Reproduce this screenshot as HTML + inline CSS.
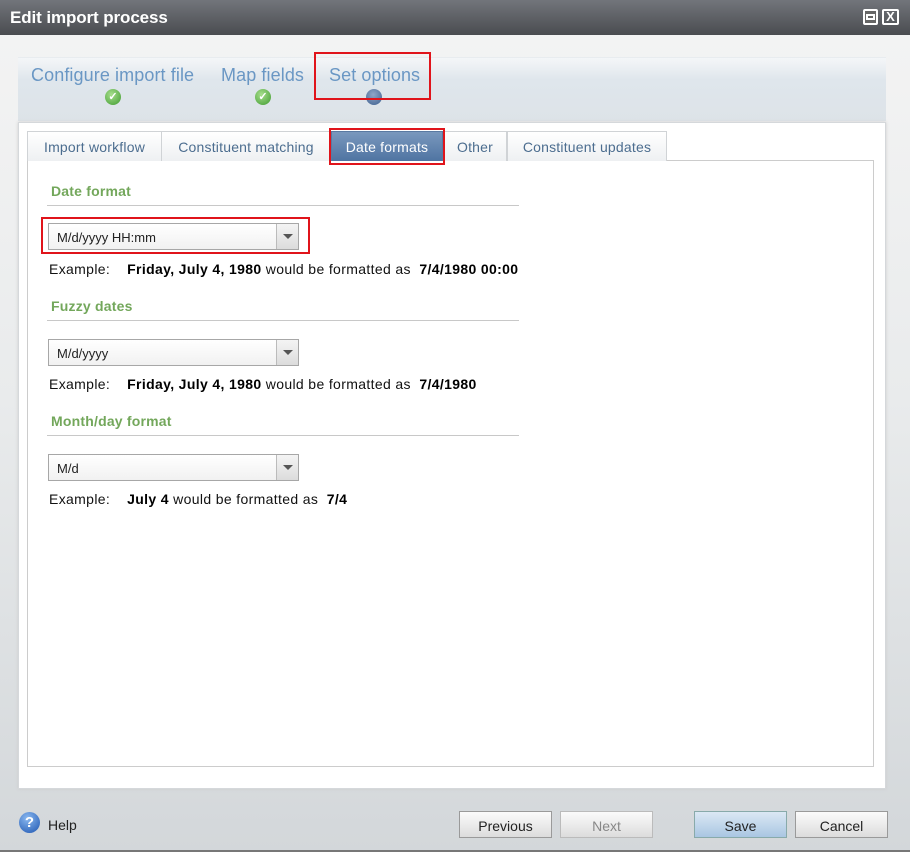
<!DOCTYPE html>
<html><head><style>
*{box-sizing:border-box;margin:0;padding:0}
body{width:910px;height:852px;overflow:hidden;font-family:"Liberation Sans",sans-serif;background:linear-gradient(#f4f4f4 0,#e9ebec 400px,#d3d7da 852px);position:relative;font-size:14px}
.abs{position:absolute}
.title{left:0;top:0;width:910px;height:35px;background:linear-gradient(#72757b,#4a4c50);color:#fff;font-weight:bold;font-size:17px;padding:8px 10px;letter-spacing:-0.1px}
.wiz{left:18px;top:57px;width:868px;height:64px;background:linear-gradient(#f4f6f8 0,#dfe6ec 35%,#dde3e8 100%);border-top:1px solid #e8ecef}
.step{font-size:18px;color:#6a97c4;top:65px;letter-spacing:0.1px}
.chk{width:16px;height:16px;border-radius:50%;background:radial-gradient(circle at 40% 35%,#a6de8c,#3f9a2f);top:89px;color:#fff;font-size:11px;text-align:center;line-height:16px;font-weight:bold}
.panel{left:18px;top:122px;width:868px;height:667px;background:#fff;border:1px solid #d5d8db;box-shadow:0 0 3px #ccc}
.inner{left:27px;top:160px;width:847px;height:607px;border:1px solid #ccc;background:#fff}
.tab{top:131px;height:30px;border:1px solid #d0d3d6;border-bottom:none;background:linear-gradient(#fff,#eef0f2);color:#4c6d8f;font-size:14px;padding:7px 0 0;text-align:center;letter-spacing:0.2px}
.red{border:2px solid #e0141b}
.h{color:#73a75b;font-weight:bold;font-size:14px;left:51px;letter-spacing:0.2px}
.line{left:47px;width:472px;height:1px;background:#c8c8c8}
.sel{left:48px;width:251px;height:27px;border:1px solid #a7a7a7;background:linear-gradient(#fff,#f1f1f1);font-size:13px;padding:6px 0 0 8px;color:#222}
.sel .arr{position:absolute;right:0;top:0;width:22px;height:25px;border-left:1px solid #bbb;background:linear-gradient(#f4f4f4,#dcdcdc)}
.sel .arr:after{content:"";position:absolute;left:6px;top:10px;border:5px solid transparent;border-top:5px solid #555}
.ex{left:49px;font-size:14px;color:#111;letter-spacing:0.35px}
.ex b{color:#000}
.btn{top:811px;width:93px;height:27px;border:1px solid #9a9a9a;background:linear-gradient(#fbfbfb,#dcdcdc);font-size:14px;text-align:center;padding-top:6px;color:#222}
</style></head><body>
<div class="abs title">Edit import process</div>
<div class="abs" style="left:863px;top:9px;width:15px;height:16px;border:2px solid #fff;border-radius:2px;background:#666"><div style="margin:3px 1px;height:6px;border:2px solid #fff"></div></div>
<div class="abs" style="left:882px;top:9px;width:17px;height:16px;border:2px solid #fff;border-radius:2px;color:#fff;font-size:13px;font-weight:bold;text-align:center;line-height:12px">X</div>
<div class="abs wiz"></div>
<div class="abs step" style="left:31px">Configure import file</div>
<div class="abs step" style="left:221px">Map fields</div>
<div class="abs step" style="left:329px">Set options</div>
<div class="abs chk" style="left:105px">✓</div>
<div class="abs chk" style="left:255px">✓</div>
<div class="abs" style="left:366px;top:89px;width:16px;height:16px;border-radius:50%;background:radial-gradient(circle at 45% 35%,#8fa6c7,#3d5f8f)"></div>
<div class="abs red" style="left:314px;top:52px;width:117px;height:48px"></div>
<div class="abs panel"></div>
<div class="abs inner"></div>
<div class="abs tab" style="left:27px;width:135px">Import workflow</div>
<div class="abs tab" style="left:161px;width:170px">Constituent matching</div>
<div class="abs tab" style="left:331px;width:112px;background:linear-gradient(#7a98bd,#4f74a2);color:#fff;border-color:#5a7aa2">Date formats</div>
<div class="abs tab" style="left:443px;width:64px">Other</div>
<div class="abs tab" style="left:507px;width:160px">Constituent updates</div>
<div class="abs red" style="left:329px;top:128px;width:116px;height:37px"></div>
<div class="abs h" style="top:183px">Date format</div>
<div class="abs line" style="top:205px"></div>
<div class="abs sel" style="top:223px">M/d/yyyy HH:mm<div class="arr"></div></div>
<div class="abs red" style="left:41px;top:217px;width:269px;height:37px"></div>
<div class="abs ex" style="top:261px">Example:&nbsp;&nbsp;&nbsp; <b>Friday, July 4, 1980</b> would be formatted as&nbsp; <b>7/4/1980 00:00</b></div>
<div class="abs h" style="top:298px">Fuzzy dates</div>
<div class="abs line" style="top:320px"></div>
<div class="abs sel" style="top:339px">M/d/yyyy<div class="arr"></div></div>
<div class="abs ex" style="top:376px">Example:&nbsp;&nbsp;&nbsp; <b>Friday, July 4, 1980</b> would be formatted as&nbsp; <b>7/4/1980</b></div>
<div class="abs h" style="top:413px">Month/day format</div>
<div class="abs line" style="top:435px"></div>
<div class="abs sel" style="top:454px">M/d<div class="arr"></div></div>
<div class="abs ex" style="top:491px">Example:&nbsp;&nbsp;&nbsp; <b>July 4</b> would be formatted as&nbsp; <b>7/4</b></div>
<div class="abs" style="left:19px;top:812px;width:21px;height:21px;border-radius:50%;background:radial-gradient(circle at 40% 30%,#8ab8f0,#1d55b0);color:#fff;font-weight:bold;font-size:15px;text-align:center;line-height:21px">?</div>
<div class="abs" style="left:48px;top:817px;font-size:14px;color:#222">Help</div>
<div class="abs btn" style="left:459px">Previous</div>
<div class="abs btn" style="left:560px;color:#888;border-color:#bbb">Next</div>
<div class="abs btn" style="left:694px;background:linear-gradient(#dbe8f4,#a9c6e2);border-color:#8aa">Save</div>
<div class="abs btn" style="left:795px">Cancel</div>
<div class="abs" style="left:0;top:850px;width:910px;height:2px;background:#777"></div>
</body></html>
